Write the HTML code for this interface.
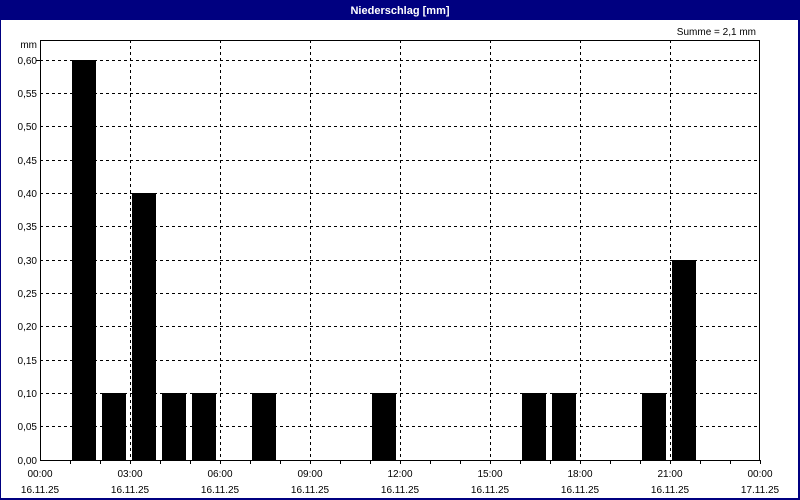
<!DOCTYPE html>
<html><head><meta charset="utf-8"><style>
html,body{margin:0;padding:0;background:#fff}
svg{display:block}
text{font-family:"Liberation Sans",sans-serif;font-size:10px;fill:#000}
</style></head><body>
<svg width="800" height="500" viewBox="0 0 800 500" xmlns="http://www.w3.org/2000/svg">
<rect x="0" y="0" width="800" height="500" fill="#000080"/>
<rect x="1" y="20" width="797" height="478" fill="#fff"/>
<text x="400" y="14" text-anchor="middle" style="font-weight:bold;fill:#fff;font-size:11px">Niederschlag [mm]</text>
<text x="756" y="35" text-anchor="end">Summe = 2,1 mm</text>
<text x="37" y="48" text-anchor="end">mm</text>
<g stroke="#000" stroke-width="1" stroke-dasharray="3,3" shape-rendering="crispEdges">
<line x1="40" y1="60.5" x2="760" y2="60.5"/>
<line x1="40" y1="93.5" x2="760" y2="93.5"/>
<line x1="40" y1="126.5" x2="760" y2="126.5"/>
<line x1="40" y1="160.5" x2="760" y2="160.5"/>
<line x1="40" y1="193.5" x2="760" y2="193.5"/>
<line x1="40" y1="226.5" x2="760" y2="226.5"/>
<line x1="40" y1="260.5" x2="760" y2="260.5"/>
<line x1="40" y1="293.5" x2="760" y2="293.5"/>
<line x1="40" y1="326.5" x2="760" y2="326.5"/>
<line x1="40" y1="360.5" x2="760" y2="360.5"/>
<line x1="40" y1="393.5" x2="760" y2="393.5"/>
<line x1="40" y1="426.5" x2="760" y2="426.5"/>
<line x1="130.5" y1="40" x2="130.5" y2="460"/>
<line x1="220.5" y1="40" x2="220.5" y2="460"/>
<line x1="310.5" y1="40" x2="310.5" y2="460"/>
<line x1="400.5" y1="40" x2="400.5" y2="460"/>
<line x1="490.5" y1="40" x2="490.5" y2="460"/>
<line x1="580.5" y1="40" x2="580.5" y2="460"/>
<line x1="670.5" y1="40" x2="670.5" y2="460"/>
</g>
<g fill="#000" shape-rendering="crispEdges">
<rect x="72" y="60" width="24" height="400"/>
<rect x="102" y="393" width="24" height="67"/>
<rect x="132" y="193" width="24" height="267"/>
<rect x="162" y="393" width="24" height="67"/>
<rect x="192" y="393" width="24" height="67"/>
<rect x="252" y="393" width="24" height="67"/>
<rect x="372" y="393" width="24" height="67"/>
<rect x="522" y="393" width="24" height="67"/>
<rect x="552" y="393" width="24" height="67"/>
<rect x="642" y="393" width="24" height="67"/>
<rect x="672" y="260" width="24" height="200"/>
</g>
<rect x="40.5" y="40.5" width="719" height="420" fill="none" stroke="#000" shape-rendering="crispEdges"/>
<g stroke="#000" shape-rendering="crispEdges">
<line x1="70.5" y1="460" x2="70.5" y2="464"/><line x1="100.5" y1="460" x2="100.5" y2="464"/><line x1="130.5" y1="460" x2="130.5" y2="464"/>
<line x1="160.5" y1="460" x2="160.5" y2="464"/><line x1="190.5" y1="460" x2="190.5" y2="464"/><line x1="220.5" y1="460" x2="220.5" y2="464"/>
<line x1="250.5" y1="460" x2="250.5" y2="464"/><line x1="280.5" y1="460" x2="280.5" y2="464"/><line x1="310.5" y1="460" x2="310.5" y2="464"/>
<line x1="340.5" y1="460" x2="340.5" y2="464"/><line x1="370.5" y1="460" x2="370.5" y2="464"/><line x1="400.5" y1="460" x2="400.5" y2="464"/>
<line x1="430.5" y1="460" x2="430.5" y2="464"/><line x1="460.5" y1="460" x2="460.5" y2="464"/><line x1="490.5" y1="460" x2="490.5" y2="464"/>
<line x1="520.5" y1="460" x2="520.5" y2="464"/><line x1="550.5" y1="460" x2="550.5" y2="464"/><line x1="580.5" y1="460" x2="580.5" y2="464"/>
<line x1="610.5" y1="460" x2="610.5" y2="464"/><line x1="640.5" y1="460" x2="640.5" y2="464"/><line x1="670.5" y1="460" x2="670.5" y2="464"/>
<line x1="700.5" y1="460" x2="700.5" y2="464"/><line x1="730.5" y1="460" x2="730.5" y2="464"/><line x1="760.5" y1="460" x2="760.5" y2="464"/>
<line x1="36" y1="60.5" x2="40" y2="60.5"/>
</g>
<g text-anchor="end">
<text x="37" y="64">0,60</text><text x="37" y="97">0,55</text><text x="37" y="130">0,50</text>
<text x="37" y="164">0,45</text><text x="37" y="197">0,40</text><text x="37" y="230">0,35</text>
<text x="37" y="264">0,30</text><text x="37" y="297">0,25</text><text x="37" y="330">0,20</text>
<text x="37" y="364">0,15</text><text x="37" y="397">0,10</text><text x="37" y="430">0,05</text>
<text x="37" y="464">0,00</text>
</g>
<g text-anchor="middle">
<text x="40" y="477">00:00</text><text x="130" y="477">03:00</text><text x="220" y="477">06:00</text>
<text x="310" y="477">09:00</text><text x="400" y="477">12:00</text><text x="490" y="477">15:00</text>
<text x="580" y="477">18:00</text><text x="670" y="477">21:00</text><text x="760" y="477">00:00</text>
<text x="40" y="493">16.11.25</text><text x="130" y="493">16.11.25</text><text x="220" y="493">16.11.25</text>
<text x="310" y="493">16.11.25</text><text x="400" y="493">16.11.25</text><text x="490" y="493">16.11.25</text>
<text x="580" y="493">16.11.25</text><text x="670" y="493">16.11.25</text><text x="760" y="493">17.11.25</text>
</g>
</svg>
</body></html>
